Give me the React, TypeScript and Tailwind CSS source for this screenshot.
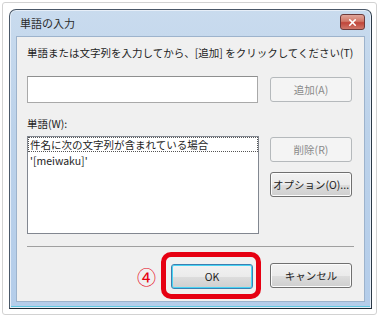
import { X } from 'lucide-react'

const jp = "font-['Noto_Sans_CJK_JP','Noto_Sans',sans-serif]"

function Button({
  label,
  disabled = false,
  isDefault = false,
  className = '',
}: {
  label: string
  disabled?: boolean
  isDefault?: boolean
  className?: string
}) {
  if (disabled) {
    return (
      <div
        className={`flex h-[25px] w-[82px] items-center justify-center rounded-[3px] border border-[#b5b9bc] bg-[#f4f4f4] text-[10.5px] text-[#8a8a8a] ${className}`}
      >
        {label}
      </div>
    )
  }
  return (
    <div
      className={`flex h-[25px] w-[82px] items-center justify-center rounded-[3px] border text-[10.5px] text-[#1e1e1e] ${
        isDefault
          ? 'border-[#3c7fb1] shadow-[inset_0_0_0_1px_#48d4f4]'
          : 'border-[#707070] shadow-[inset_0_0_0_1px_#fcfcfc]'
      } bg-[linear-gradient(#f2f2f2_0%,#ebebeb_50%,#dddddd_51%,#cfcfcf_100%)] ${className}`}
    >
      {label}
    </div>
  )
}

export default function App() {
  return (
    <div className={`h-[318px] w-[379px] bg-white p-[2px] ${jp}`}>
      <div className="flex h-[313px] flex-col rounded-[3px] border border-[#d2d2d2] pb-[5px] pl-[6px] pr-[4px] pt-[6px]">
        {/* window */}
        <div className="flex flex-1 flex-col rounded-t-[7px] border border-[#4a5868] border-b-[#1c2a34] border-r-[#2c3a48] bg-[linear-gradient(180deg,#c9dbee_0%,#bcd2ea_40%,#b4cdea_100%)] shadow-[inset_0_0_0_1px_#e6eef8,inset_0_-2px_0_#5fc8e0]">
          <div className="flex h-[26px] items-center justify-between pl-[10px] pr-[6px]">
            <span className="text-[11px] text-[#2a2a2a]">単語の入力</span>
            <div className="mt-[-2px] flex h-[16px] w-[25px] items-center justify-center rounded-[3px] border border-[#6d3a3a] bg-[linear-gradient(#e0a69b_0%,#d27868_45%,#c0453a_55%,#d0786a_100%)]">
              <X className="h-[11px] w-[11px] text-white" strokeWidth={3.5} />
            </div>
          </div>
          {/* client */}
          <div className="mx-[6px] mb-[6px] flex flex-1 flex-col border border-[#9db3cc] bg-[#f0f0f0] px-[10px] pt-[9px]">
            <div className="text-[10.5px] leading-[14px] text-[#1e1e1e]">
              単語または文字列を入力してから、[追加] をクリックしてください(T)
            </div>
            <div className="mt-[16px] flex items-start justify-between pr-[2px]">
              <div className="h-[27px] w-[231px] border border-[#a9a9a9] border-t-[#8e8f8f] bg-white" />
              <Button label="追加(A)" disabled className="mt-[1px]" />
            </div>
            <div className="mt-[14px] text-[10.5px] leading-[14px] text-[#1e1e1e]">単語(W):</div>
            <div className="mt-[5px] flex items-start justify-between pr-[2px]">
              <div className="h-[98px] w-[232px] border border-[#828790] bg-white text-[10.5px] leading-[13px] text-[#1e1e1e]">
                <div className="border border-dotted border-[#555] px-[1px]">件名に次の文字列が含まれている場合</div>
                <div className="px-[2px] pt-[2px]">'[meiwaku]'</div>
              </div>
              <div className="flex flex-col gap-[10px] pt-[1px]">
                <Button label="削除(R)" disabled />
                <Button label="オプション(O)..." />
              </div>
            </div>
            <div className="mt-[12px] h-[2px] border-t border-[#a0a0a0] border-b-white" />
            <div className="mt-[4px] flex items-center justify-end pr-[2px]">
              <span className="mr-[5px] mt-[2px] text-[19px] leading-none text-[#e60012]">④</span>
              <div className="rounded-[10px] border-[5px] border-[#e60012] pb-[5px] pl-[5px] pr-[3px] pt-[7px]">
                <Button label="OK" isDefault className="w-[81px]" />
              </div>
              <Button label="キャンセル" className="ml-[9px]" />
            </div>
          </div>
        </div>
      </div>
    </div>
  )
}
